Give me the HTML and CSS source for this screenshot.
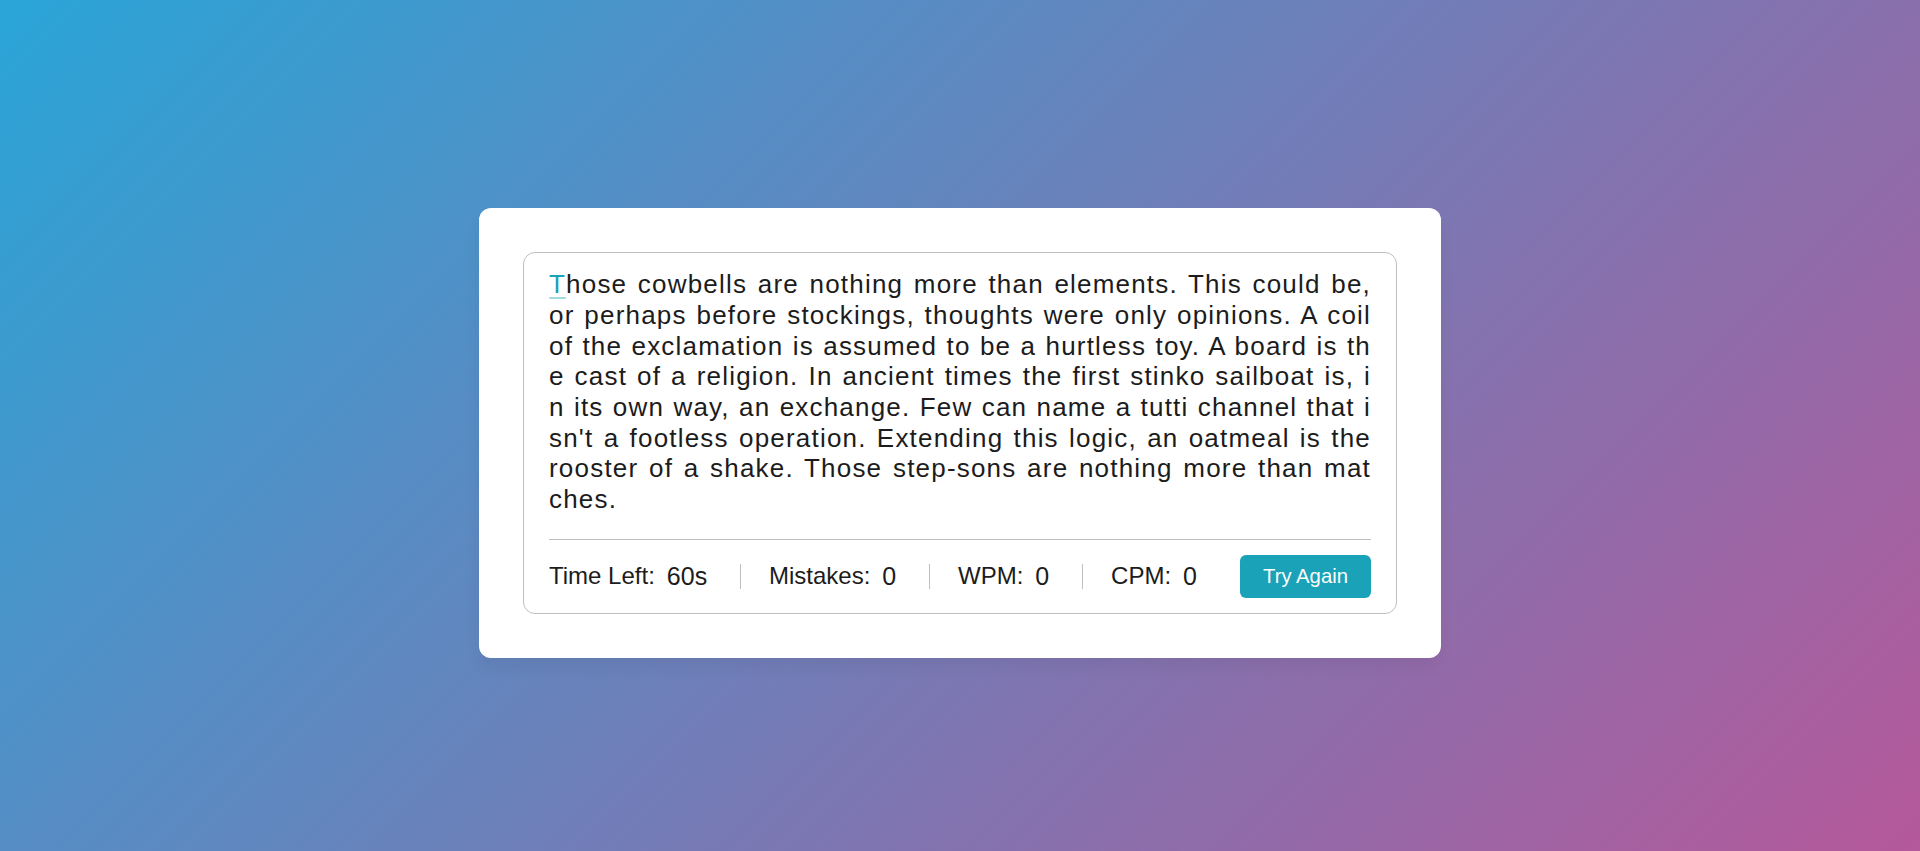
FILE: index.html
```html
<!DOCTYPE html>
<html lang="en">
<head>
<meta charset="utf-8">
<title>Typing Speed Test</title>
<link rel="stylesheet" href="styles.css">
</head>
<body>
<div class="wrapper">
  <div class="content-box">
    <div class="typing-text">
      <p>
        <span class="ln"><span class="active">T</span>hose cowbells are nothing more than elements. This could be,</span>
        <span class="ln">or perhaps before stockings, thoughts were only opinions. A coil</span>
        <span class="ln">of the exclamation is assumed to be a hurtless toy. A board is th</span>
        <span class="ln">e cast of a religion. In ancient times the first stinko sailboat is, i</span>
        <span class="ln">n its own way, an exchange. Few can name a tutti channel that i</span>
        <span class="ln">sn't a footless operation. Extending this logic, an oatmeal is the</span>
        <span class="ln">rooster of a shake. Those step-sons are nothing more than mat</span>
        <span class="ln last">ches.</span>
      </p>
    </div>
    <div class="content">
      <ul class="result-details">
        <li class="time"><p>Time Left:</p><span><b>60</b>s</span></li>
        <li class="mistake"><p>Mistakes:</p><span>0</span></li>
        <li class="wpm"><p>WPM:</p><span>0</span></li>
        <li class="cpm"><p>CPM:</p><span>0</span></li>
      </ul>
      <button class="retry">Try Again</button>
    </div>
  </div>
</div>
</body>
</html>
```

FILE: styles.css
```css
* {
  margin: 0;
  padding: 0;
  box-sizing: border-box;
}

body {
  min-height: 100vh;
  display: flex;
  align-items: center;
  justify-content: center;
  padding-top: 15px;
  font-family: "Liberation Sans", Arial, sans-serif;
  color: #1c1c1c;
  background: linear-gradient(135deg, #2aa5d7 0%, #b4589a 100%);
}

.wrapper {
  width: 962px;
  padding: 44px;
  background: #fff;
  border-radius: 12px;
  box-shadow: 0 10px 15px rgba(0, 0, 0, 0.05);
}

.content-box {
  padding: 16px 25px 0;
  border: 1px solid #bfbfbf;
  border-radius: 12px;
}

.typing-text p {
  font-size: 26px;
  line-height: 30.7px;
  letter-spacing: 1.2px;
}

.typing-text .ln {
  display: block;
  text-align: justify;
  text-align-last: justify;
  white-space: nowrap;
}

.typing-text .ln.last {
  text-align-last: left;
}

.typing-text span.active {
  position: relative;
  color: #17a2b8;
}

.typing-text span.active::before {
  content: "";
  position: absolute;
  left: 0;
  bottom: 0;
  width: 100%;
  height: 2px;
  border-radius: 5px;
  background: #17a2b8;
  opacity: 0.4;
}

.content {
  margin-top: 24px;
  padding: 15px 0 15px;
  display: flex;
  align-items: center;
  justify-content: space-between;
  border-top: 1px solid #bfbfbf;
}

.result-details {
  display: flex;
  align-items: center;
  justify-content: space-between;
  width: calc(100% - 174px);
  list-style: none;
}

.result-details li {
  display: flex;
  align-items: center;
  height: 25px;
}

.result-details li:not(:first-child) {
  padding-left: 28px;
  border-left: 1px solid #bfbfbf;
}

.result-details li p {
  font-size: 24px;
}

.result-details li span {
  display: block;
  font-size: 25px;
  margin-left: 12px;
}

.result-details li span b {
  font-weight: 400;
}

.retry {
  width: 131px;
  padding: 10px 0;
  border: none;
  border-radius: 6px;
  background: #1aa2b8;
  color: #fff;
  font-family: "Liberation Sans", Arial, sans-serif;
  font-size: 20.3px;
  cursor: pointer;
}
```
